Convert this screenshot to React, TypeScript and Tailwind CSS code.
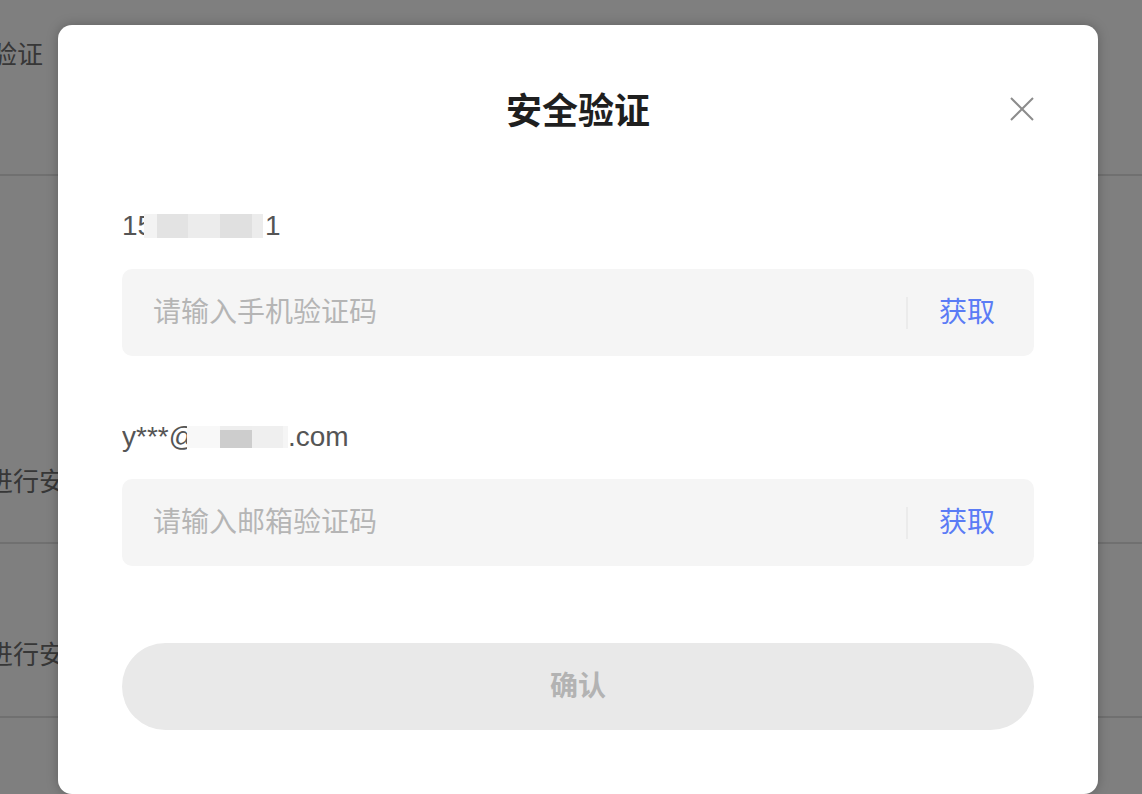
import React from "react";

const font = "font-['Liberation_Sans','Noto_Sans_CJK_SC',sans-serif]";

function CodeInput({ placeholder }: { placeholder: string }) {
  return (
    <div className="flex h-[87px] items-center rounded-[10px] bg-[#f5f5f5] pl-[31px] pr-[39px]">
      <input
        type="text"
        placeholder={placeholder}
        className="min-w-0 flex-1 bg-transparent text-[28px] text-[#333] outline-none placeholder:text-[#b5b5b5]"
      />
      <div className="h-[32px] w-[2px] bg-[#ebebeb]" />
      <button type="button" className="ml-[31px] text-[28px] text-[#5b7cf5]">
        获取
      </button>
    </div>
  );
}

export default function App() {
  return (
    <div className={`relative h-[794px] w-[1142px] overflow-hidden bg-white ${font}`}>
      {/* page behind the dialog */}
      <div className="flex flex-col text-[26px] leading-[36px] text-[#6e6e6e]">
        <div className="h-[174px] pt-[37px]">
          <span className="-ml-[9px]">验证</span>
        </div>
        <div className="h-[2px] bg-[#e0e0e0]" />
        <div className="h-[366px] pt-[288px]">
          <span className="-ml-[13px] whitespace-nowrap">进行安全验证</span>
        </div>
        <div className="h-[2px] bg-[#e0e0e0]" />
        <div className="h-[172px] pt-[93px]">
          <span className="-ml-[13px] whitespace-nowrap">进行安全验证</span>
        </div>
        <div className="h-[2px] bg-[#e0e0e0]" />
      </div>

      {/* overlay */}
      <div className="absolute inset-0 bg-black/50">
        <div className="relative ml-[58px] mt-[25px] flex h-[769px] w-[1040px] flex-col rounded-[14px] bg-white px-16 shadow-[0_0_12px_rgba(0,0,0,0.25)]">
          <h2 className="pt-[62px] text-center text-[36px] font-bold leading-[50px] text-[#1f1f1f]">
            安全验证
          </h2>
          <button type="button" className="absolute right-[64px] top-[72px] h-6 w-6" aria-label="close">
            <svg viewBox="0 0 24 24" className="h-6 w-6" fill="none" stroke="#8c8c8c" strokeWidth="2">
              <path d="M1 1L23 23M23 1L1 23" />
            </svg>
          </button>

          <div className="mt-[69px] flex h-[40px] items-center text-[28px] text-[#555]">
            <span className="inline-block w-[22px] overflow-hidden whitespace-nowrap">15</span>
            <div className="flex h-[24px]">
              <div className="w-[13px] bg-[#f3f3f3]" />
              <div className="w-[31px] bg-[#e3e3e3]" />
              <div className="w-[32px] bg-[#ececec]" />
              <div className="w-[32px] bg-[#e0e0e0]" />
              <div className="w-[11px] bg-[#ececec]" />
            </div>
            <span className="ml-[2px]">1</span>
          </div>
          <div className="mt-[23px]">
            <CodeInput placeholder="请输入手机验证码" />
          </div>

          <div className="mt-[61px] flex h-[40px] items-center text-[28px] text-[#555]">
            <span className="inline-block w-[65px] overflow-hidden whitespace-nowrap">y***@</span>
            <div className="flex h-[22px] items-stretch">
              <div className="w-[33px] bg-[#f8f8f8]" />
              <div className="flex w-[32px] flex-col">
                <div className="h-[4px] bg-[#eeeeee]" />
                <div className="flex-1 bg-[#cdcdcd]" />
              </div>
              <div className="w-[31px] bg-[#efefef]" />
              <div className="w-[5px] bg-[#f5f5f5]" />
            </div>
            <span>.com</span>
          </div>
          <div className="mt-[22px]">
            <CodeInput placeholder="请输入邮箱验证码" />
          </div>

          <button
            type="button"
            className="mt-[77px] h-[87px] w-full rounded-full bg-[#e9e9e9] text-[28px] font-bold text-[#b3b3b3]"
          >
            确认
          </button>
        </div>
      </div>
    </div>
  );
}
